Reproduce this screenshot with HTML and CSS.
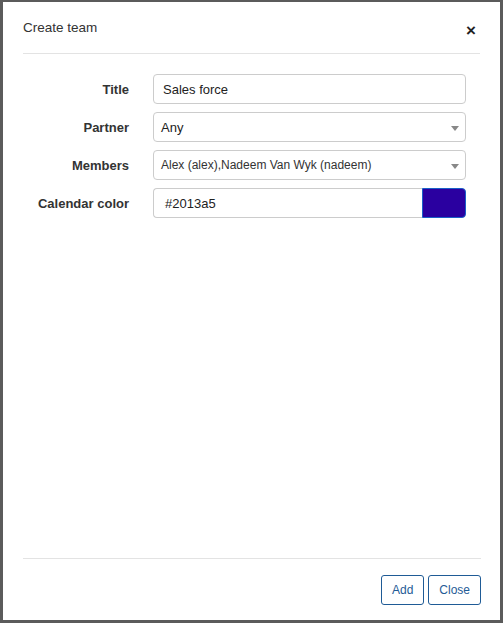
FILE: index.html
```html
<!DOCTYPE html>
<html>
<head>
<meta charset="utf-8">
<link rel="stylesheet" href="styles.css">
</head>
<body>
<div class="modal">
  <div class="modal-header">
    <div class="modal-title">Create team</div>
    <div class="close-x">&times;</div>
  </div>
  <div class="modal-body">
    <div class="form">
      <label class="label">Title</label>
      <div class="field"><span class="value">Sales force</span></div>
      <label class="label">Partner</label>
      <div class="field select"><span class="value">Any</span><span class="caret"></span></div>
      <label class="label">Members</label>
      <div class="field select"><span class="value small">Alex (alex),Nadeem Van Wyk (nadeem)</span><span class="caret"></span></div>
      <label class="label">Calendar color</label>
      <div class="color-row">
        <div class="field color-text"><span class="value">#2013a5</span></div>
        <div class="swatch"></div>
      </div>
    </div>
  </div>
  <div class="modal-footer">
    <button class="btn">Add</button>
    <button class="btn">Close</button>
  </div>
</div>
</body>
</html>
```

FILE: styles.css
```css
html, body {
  margin: 0;
  padding: 0;
  height: 100%;
}
body {
  background: #5b5b5b;
  font-family: "Liberation Sans", Arial, sans-serif;
  color: #333;
  padding: 2px 3px 3px 3px;
  box-sizing: border-box;
}
.modal {
  background: #fff;
  height: 618px;
  display: flex;
  flex-direction: column;
  box-sizing: border-box;
}
.modal-header {
  margin: 0 20px;
  height: 51px;
  border-bottom: 1px solid #e3e3e3;
  display: flex;
  justify-content: space-between;
  align-items: flex-start;
}
.modal-title {
  margin-top: 17px;
  font-size: 13.5px;
  line-height: 17px;
  color: #333;
}
.close-x {
  margin-top: 20px;
  margin-right: 4px;
  font-size: 17px;
  font-weight: bold;
  line-height: 17px;
  color: #222;
}
.modal-body {
  flex: 1;
  padding: 20px 34px 0 20px;
}
.form {
  display: grid;
  grid-template-columns: 106px 1fr;
  column-gap: 24px;
  row-gap: 8px;
  align-items: center;
}
.label {
  text-align: right;
  font-weight: bold;
  font-size: 13px;
  color: #333;
}
.field {
  height: 30px;
  border: 1px solid #cccccc;
  border-radius: 4px;
  box-sizing: border-box;
  display: flex;
  align-items: center;
  padding: 0 9px;
  font-size: 13px;
  color: #222;
  position: relative;
}
.select {
  padding-left: 7px;
}
.value.small {
  font-size: 12px;
  color: #333;
}
.caret {
  position: absolute;
  right: 6px;
  top: 13px;
  width: 0;
  height: 0;
  border-left: 4px solid transparent;
  border-right: 4px solid transparent;
  border-top: 5px solid #888;
}
.color-row {
  display: flex;
  height: 30px;
}
.color-text {
  flex: 1;
  border-radius: 4px 0 0 4px;
  border-right: none;
  padding-left: 11px;
}
.swatch {
  width: 44px;
  height: 30px;
  box-sizing: border-box;
  background: #2a00a0;
  border: 1px solid #1a5fc8;
  border-radius: 0 4px 4px 0;
}
.modal-footer {
  margin: 0 19px 0 20px;
  border-top: 1px solid #e3e3e3;
  padding: 16px 0 15px;
  display: flex;
  justify-content: flex-end;
  gap: 4px;
}
.btn {
  height: 30px;
  padding: 0 10px;
  background: #fff;
  border: 1px solid #1f5b96;
  border-radius: 3px;
  color: #1f5b96;
  font-family: "Liberation Sans", Arial, sans-serif;
  font-size: 12px;
  cursor: pointer;
}
```
